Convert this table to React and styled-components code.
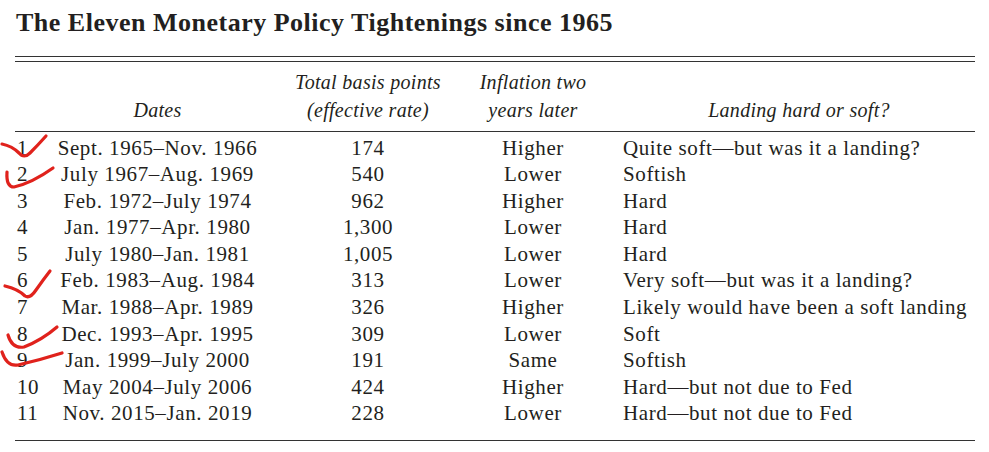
import React from 'react';
import styled, { createGlobalStyle } from 'styled-components';

const GlobalStyle = createGlobalStyle`
  body {
    margin: 0;
    background: #fff;
    color: #231f20;
    font-family: "Liberation Serif", "Times New Roman", serif;
  }
`;

const Page = styled.div`
  position: relative;
  width: 989px;
  height: 452px;
  padding: 0 14px 0 15px;
  box-sizing: border-box;
`;

const Title = styled.h1`
  margin: 0;
  padding: 8px 0 0 1px;
  height: 56px;
  box-sizing: border-box;
  font-size: 26px;
  font-weight: bold;
  letter-spacing: 0.5px;
  line-height: 30px;
`;

const DoubleRule = styled.div`
  width: 960px;
  height: 3.5px;
  border-top: 1.5px solid #333;
  border-bottom: 1.5px solid #333;
`;

const Table = styled.table`
  width: 960px;
  table-layout: fixed;
  border-collapse: collapse;
  font-size: 21px;
  letter-spacing: 0.6px;
`;

const Head = styled.thead`
  border-bottom: 1.5px solid #333;
`;

const Th = styled.th`
  box-sizing: border-box;
  font-weight: normal;
  font-style: italic;
  font-size: 20px;
  letter-spacing: 0.3px;
  line-height: 28px;
  vertical-align: bottom;
  text-align: center;
  padding: ${p => (p.$top ? '6px' : '0')} 0 7px ${p => p.$pad || 0}px;
  width: ${p => p.$w}px;
`;

const Body = styled.tbody`
  border-bottom: 1.5px solid #333;
  tr:first-child td { padding-top: 3px; }
  tr:last-child td { padding-bottom: 13px; }
`;

const Td = styled.td`
  box-sizing: border-box;
  line-height: 26.6px;
  padding: 0 0 0 ${p => p.$pad || 0}px;
  text-align: ${p => p.$align || 'center'};
  white-space: nowrap;
`;

const Marks = styled.svg`
  position: absolute;
  left: 0;
  top: 0;
  pointer-events: none;
`;

const rows = [
  ['1', 'Sept. 1965–Nov. 1966', '174', 'Higher', 'Quite soft—but was it a landing?'],
  ['2', 'July 1967–Aug. 1969', '540', 'Lower', 'Softish'],
  ['3', 'Feb. 1972–July 1974', '962', 'Higher', 'Hard'],
  ['4', 'Jan. 1977–Apr. 1980', '1,300', 'Lower', 'Hard'],
  ['5', 'July 1980–Jan. 1981', '1,005', 'Lower', 'Hard'],
  ['6', 'Feb. 1983–Aug. 1984', '313', 'Lower', 'Very soft—but was it a landing?'],
  ['7', 'Mar. 1988–Apr. 1989', '326', 'Higher', 'Likely would have been a soft landing'],
  ['8', 'Dec. 1993–Apr. 1995', '309', 'Lower', 'Soft'],
  ['9', 'Jan. 1999–July 2000', '191', 'Same', 'Softish'],
  ['10', 'May 2004–July 2006', '424', 'Higher', 'Hard—but not due to Fed'],
  ['11', 'Nov. 2015–Jan. 2019', '228', 'Lower', 'Hard—but not due to Fed'],
];

// hand-drawn red ticks over the row numbers
const checks = [
  'M2 144 Q12 146 19 153 Q24 159 30 153 Q38 145 46 136',
  'M7 172 Q6 187 14 187 Q32 183 53 168',
  'M5 286 Q18 289 25 296 Q30 299 36 290 Q43 280 50 271',
  'M8 335 Q12 349 24 347 Q42 340 57 327',
  'M2 352 Q7 367 18 365 Q40 360 62 353',
];

export default function App() {
  return (
    <Page>
      <GlobalStyle />
      <Title>The Eleven Monetary Policy Tightenings since 1965</Title>
      <DoubleRule />
      <Table>
        <Head>
          <tr>
            <Th $w={35} />
            <Th $w={215}>Dates</Th>
            <Th $w={206} $top>Total basis points<br />(effective rate)</Th>
            <Th $w={124}>Inflation two<br />years later</Th>
            <Th $w={380} $pad={28}>Landing hard or soft?</Th>
          </tr>
        </Head>
        <Body>
          {rows.map(r => (
            <tr key={r[0]}>
              <Td $align="left" $pad={2}>{r[0]}</Td>
              <Td>{r[1]}</Td>
              <Td>{r[2]}</Td>
              <Td>{r[3]}</Td>
              <Td $align="left" $pad={28}>{r[4]}</Td>
            </tr>
          ))}
        </Body>
      </Table>
      <Marks width="989" height="452">
        {checks.map((d, i) => (
          <path key={i} d={d} fill="none" stroke="#e0221c" strokeWidth="3.2" strokeLinecap="round" strokeLinejoin="round" />
        ))}
      </Marks>
    </Page>
  );
}
